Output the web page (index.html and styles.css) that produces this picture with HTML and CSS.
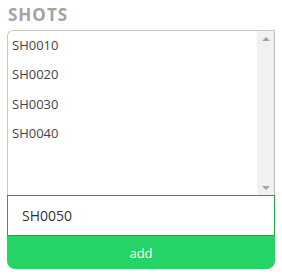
FILE: index.html
```html
<!doctype html>
<html lang="en">
<head>
    <meta charset="UTF-8">
    <title>Shots</title>
    <link rel="stylesheet" href="styles.css">
</head>
<body>
<div id="shots">
    <h3 class="title">SHOTS</h3>
    <div class="list-box">
        <ul class="shot-list">
            <li>SH0010</li>
            <li>SH0020</li>
            <li>SH0030</li>
            <li>SH0040</li>
        </ul>
        <div class="scrollbar">
            <span class="arrow arrow-up"></span>
            <span class="arrow arrow-down"></span>
        </div>
    </div>
    <input type="text" class="shot-input" value="SH0050">
    <button type="button" class="btn-add">add</button>
</div>
</body>
</html>
```

FILE: styles.css
```css
* {
    margin: 0;
    padding: 0;
    box-sizing: border-box;
}

body {
    background-color: #fff;
    font-family: "Open Sans", "Liberation Sans", sans-serif;
}

#shots {
    padding: 4px 7px;
    display: flex;
    flex-direction: column;
}

.title {
    font-size: 17px;
    font-weight: 700;
    color: #a3a3a3;
    letter-spacing: 1px;
    line-height: 22px;
    padding-left: 1px;
    margin-bottom: 4px;
}

.list-box {
    display: flex;
    height: 165px;
    border: 1px solid #c8c8c8;
    border-right-color: #bdbdbd;
    border-bottom: none;
    border-top-left-radius: 6px;
}

.shot-list {
    flex: 1;
    list-style: none;
    padding-top: 3px;
}

.shot-list li {
    font-size: 13px;
    line-height: 20px;
    padding: 1px 4px 8.4px;
    color: #444;
}

.scrollbar {
    width: 17px;
    background-color: #f1f1f1;
    display: flex;
    flex-direction: column;
    justify-content: space-between;
    align-items: center;
    padding: 6px 0 5px;
}

.arrow {
    width: 0;
    height: 0;
    border-left: 4px solid transparent;
    border-right: 4px solid transparent;
}

.arrow-up {
    border-bottom: 4px solid #a3a3a3;
}

.arrow-down {
    border-top: 4px solid #a3a3a3;
}

.shot-input {
    height: 41px;
    border: 1px solid #1ea64e;
    outline: none;
    padding: 0 14px;
    font-family: "Open Sans", "Liberation Sans", sans-serif;
    font-size: 14px;
    color: #333;
}

.btn-add {
    height: 33px;
    border: none;
    outline: none;
    background-color: #26d366;
    color: #fff;
    font-family: "Open Sans", "Liberation Sans", sans-serif;
    font-size: 13px;
    border-bottom-left-radius: 8px;
    border-bottom-right-radius: 8px;
}
```
